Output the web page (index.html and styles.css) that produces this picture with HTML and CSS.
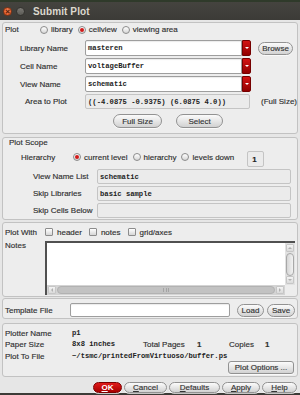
FILE: index.html
```html
<!DOCTYPE html>
<html lang="en">
<head>
    <meta charset="UTF-8">
    <title>Submit Plot</title>
    <link rel="stylesheet" href="styles.css">
</head>
<body>
    <!-- Title bar -->
    <div class="titlebar">
        <span class="wbtn close">×</span>
        <span class="wbtn min"></span>
        <span class="title">Submit Plot</span>
    </div>

    <div class="dialog">
        <!-- Plot -->
        <div class="frame f-plot">
            <div class="row r-plot">
                <span class="lbl w-plot">Plot</span>
                <span class="radio"><i></i>library</span>
                <span class="radio on"><i></i>cellview</span>
                <span class="radio"><i></i>viewing area</span>
            </div>
            <div class="row r-field first">
                <span class="lbl w-name">Library Name</span>
                <span class="input combo">masteren</span><span class="drop"></span>
                <span class="btn b-browse">Browse</span>
            </div>
            <div class="row r-field">
                <span class="lbl w-name">Cell Name</span>
                <span class="input combo">voltageBuffer</span><span class="drop"></span>
            </div>
            <div class="row r-field">
                <span class="lbl w-name">View Name</span>
                <span class="input combo">schematic</span><span class="drop"></span>
            </div>
            <div class="row r-area">
                <span class="lbl w-name w-area">Area to Plot</span>
                <span class="input ro area">((-4.0875 -0.9375) (6.0875 4.0))</span>
                <span class="lbl full">(Full Size)</span>
            </div>
            <div class="row r-btns">
                <span class="btn b-full">Full Size</span>
                <span class="btn b-select">Select</span>
            </div>
        </div>

        <!-- Plot Scope -->
        <div class="frame f-scope">
            <div class="row r-title">
                <span class="lbl">Plot Scope</span>
            </div>
            <div class="row r-hier">
                <span class="lbl w-hier up">Hierarchy</span>
                <span class="radio on up"><i></i>current level</span>
                <span class="radio up"><i></i>hierarchy</span>
                <span class="radio up"><i></i>levels down</span>
                <span class="spin">1</span>
            </div>
            <div class="row r-scope">
                <span class="lbl w-scope">View Name List</span>
                <span class="input ro scope">schematic</span>
            </div>
            <div class="row r-scope">
                <span class="lbl w-scope">Skip Libraries</span>
                <span class="input ro scope">basic sample</span>
            </div>
            <div class="row r-scope">
                <span class="lbl w-scope">Skip Cells Below</span>
                <span class="input ro scope"></span>
            </div>
        </div>

        <!-- Plot With / Notes -->
        <div class="frame f-with">
            <div class="row r-with">
                <span class="lbl w-with">Plot With</span>
                <span class="check"><i></i>header</span>
                <span class="check"><i></i>notes</span>
                <span class="check"><i></i>grid/axes</span>
            </div>
            <div class="row r-notes">
                <span class="lbl w-with notes-lbl">Notes</span>
                <div class="textarea">
                    <div class="text"></div>
                    <div class="vscroll">
                        <span class="arrow a-up"></span>
                        <span class="vthumb"></span>
                        <span class="arrow a-down"></span>
                    </div>
                    <div class="hscroll">
                        <span class="arrow a-left"></span>
                        <span class="hthumb"><b></b></span>
                        <span class="arrow a-right"></span>
                    </div>
                    <div class="corner"></div>
                </div>
            </div>
        </div>

        <!-- Template -->
        <div class="frame f-tmpl">
            <div class="row r-tmpl">
                <span class="lbl w-tmpl">Template File</span>
                <span class="input tmpl"></span>
                <span class="btn b-load">Load</span>
                <span class="btn b-save">Save</span>
            </div>
        </div>

        <!-- Plotter info -->
        <div class="frame f-info">
            <div class="row r-info first">
                <span class="lbl w-info">Plotter Name</span>
                <span class="val">p1</span>
            </div>
            <div class="row r-info">
                <span class="lbl w-info">Paper Size</span>
                <span class="val w-paper">8x8 inches</span>
                <span class="lbl w-total">Total Pages</span>
                <span class="lbl num w-one">1</span>
                <span class="lbl w-copies">Copies</span>
                <span class="lbl num">1</span>
            </div>
            <div class="row r-info third">
                <span class="lbl w-info">Plot To File</span>
                <span class="val">~/tsmc/printedFromVirtuoso/buffer.ps</span>
            </div>
            <div class="row r-opts">
                <span class="btn b-opts">Plot Options ...</span>
            </div>
        </div>

        <!-- Dialog buttons -->
        <div class="row r-actions">
            <span class="btn red b-ok"><u>O</u>K</span>
            <span class="btn b-cancel"><u>C</u>ancel</span>
            <span class="btn b-defaults"><u>D</u>efaults</span>
            <span class="btn b-apply"><u>A</u>pply</span>
            <span class="btn b-help"><u>H</u>elp</span>
        </div>
    </div>
    <div class="bottom-edge"></div>
</body>
</html>
```

FILE: styles.css
```css
/* base */
* {
    box-sizing: border-box;
}
body {
    margin: 0;
    width: 300px;
    height: 395px;
    overflow: hidden;
    font-family: "Liberation Sans", Arial, sans-serif;
    font-size: 8px;
    color: #303030;
    background: #e6e6e6;
    -webkit-text-stroke: 0.15px;
}

/* title bar */
.titlebar {
    height: 20px;
    background: linear-gradient(#45443f, #3c3b37);
    border-top: 2px solid #2f3a2a;
    display: flex;
    align-items: center;
    padding-left: 3px;
}
.wbtn {
    width: 9px;
    height: 9px;
    border-radius: 50%;
}
.close {
    background: radial-gradient(circle at 50% 40%, #f48a5e, #dc4b17);
    border: 1px solid #7d3416;
    color: #5a2008;
    font-size: 8px;
    line-height: 7px;
    text-align: center;
    font-weight: bold;
}
.min {
    margin-left: 4px;
    background: linear-gradient(#7b7974, #5b5a55);
    border: 1px solid #34332f;
}
.title {
    margin-left: 8px;
    color: #dcd8ce;
    font-weight: bold;
    font-size: 10px;
    letter-spacing: 0.1px;
    -webkit-text-stroke: 0;
}

/* frames */
.dialog {
    padding: 2px 2px 0;
}
.frame {
    border: 1px solid #c2c2c2;
    border-radius: 3px;
    background: #ededed;
    display: flex;
    flex-direction: column;
}
.f-plot { padding: 0 0 5px; }
.f-scope { margin-top: 3px; padding-bottom: 1px; }
.f-with { margin-top: 2px; padding-bottom: 1px; }
.f-tmpl { margin-top: 1px; padding-bottom: 1px; }
.f-info { margin-top: 4px; padding-bottom: 2px; }

.row {
    display: flex;
    align-items: center;
}
.lbl {
    white-space: nowrap;
}

/* radios and checkboxes */
.radio, .check {
    display: flex;
    align-items: center;
    margin-right: 5px;
}
.radio i, .check i {
    width: 8px;
    height: 8px;
    margin-right: 3px;
    border: 1px solid #8c8c8c;
    background: linear-gradient(#ffffff, #d6d6d6);
    display: flex;
    align-items: center;
    justify-content: center;
}
.radio i {
    border-radius: 50%;
}
.check i {
    border-radius: 1px;
    margin-right: 4px;
}
.check {
    margin-right: 7px;
}
.radio.on i::after {
    content: "";
    width: 4px;
    height: 4px;
    border-radius: 50%;
    background: #d21a1a;
}

/* inputs */
.input {
    height: 16px;
    border: 1px solid #9e9e9e;
    border-radius: 2px;
    background: #ffffff;
    box-shadow: inset 0 1px 1px rgba(0, 0, 0, 0.08);
    padding-left: 2px;
    font-family: "Liberation Mono", monospace;
    font-weight: bold;
    font-size: 7.2px;
    color: #222;
    -webkit-text-stroke: 0;
    display: flex;
    align-items: center;
    white-space: nowrap;
    overflow: hidden;
}
.input.ro {
    background: #ebebeb;
    border-color: #c4c4c4;
    box-shadow: none;
}
.combo {
    width: 157px;
    border-radius: 2px 0 0 2px;
}
.drop {
    width: 9px;
    height: 16px;
    background: linear-gradient(#d41414, #920000);
    border: 1px solid #760000;
    border-radius: 0 2px 2px 0;
    display: flex;
    align-items: center;
    justify-content: center;
}
.drop::after {
    content: "";
    border-left: 2px solid transparent;
    border-right: 2px solid transparent;
    border-top: 2px solid #ffffff;
}

/* buttons */
.btn {
    height: 14px;
    border: 1px solid #929292;
    border-radius: 7px;
    background: linear-gradient(#fbfbfb, #d2d2d2);
    box-shadow: 0 1px 0 rgba(255, 255, 255, 0.7);
    color: #333;
    display: flex;
    align-items: center;
    justify-content: center;
    white-space: nowrap;
}
.btn.red {
    background: linear-gradient(#e01a1a, #a80000);
    border-color: #7a0000;
    color: #ffffff;
    font-weight: bold;
    -webkit-text-stroke: 0;
}

/* Plot frame */
.r-plot {
    height: 13px;
    padding-left: 2px;
}
.w-plot { width: 35px; }
.r-field {
    height: 16px;
    margin-top: 2px;
}
.r-field.first { margin-top: 4px; }
.w-name {
    width: 82px;
    padding-left: 17px;
}
.w-area { padding-left: 22px; }
.b-browse {
    margin-left: 7px;
    width: 35px;
    height: 13px;
}
.r-area {
    height: 15px;
    margin-top: 2px;
}
.area {
    width: 165px;
    height: 15px;
}
.full { margin-left: 11px; }
.r-btns {
    height: 14px;
    margin-top: 5px;
    padding-left: 110px;
}
.b-full { width: 49px; }
.b-select {
    width: 47px;
    margin-left: 14px;
}

/* Plot Scope frame */
.r-title {
    height: 9px;
    padding-left: 6px;
}
.r-hier {
    height: 16px;
    margin-top: 4px;
}
.up { margin-bottom: 4px; }
.w-hier {
    width: 70px;
    padding-left: 18px;
}
.spin {
    width: 17px;
    height: 16px;
    margin-left: 8px;
    border: 1px solid #c4c4c4;
    border-radius: 2px;
    background: #ebebeb;
    padding-left: 4px;
    display: flex;
    align-items: center;
    font-weight: bold;
    color: #222;
}
.r-scope {
    height: 15px;
    margin-top: 2px;
}
.w-scope {
    width: 94px;
    padding-left: 30px;
}
.scope {
    width: 194px;
    height: 15px;
}

/* Plot With frame */
.r-with {
    height: 12px;
    margin-top: 3px;
    padding-left: 2px;
}
.w-with { width: 40px; }
.r-notes {
    margin-top: 3px;
    padding-left: 2px;
    align-items: flex-start;
}
.notes-lbl { line-height: 10px; }
.textarea {
    width: 250px;
    height: 54px;
    border-top: 2px solid #505050;
    border-left: 2px solid #505050;
    background: #ffffff;
    display: grid;
    grid-template-columns: 1fr 10px;
    grid-template-rows: 1fr 10px;
}
.vscroll {
    background: #e2e2e2;
    display: flex;
    flex-direction: column;
    align-items: center;
    padding: 1px 0;
}
.hscroll {
    background: #d4d4d4;
    display: flex;
    align-items: center;
    padding: 0 1px;
}
.corner {
    background: #ededed;
}
.arrow {
    width: 8px;
    height: 8px;
    background: linear-gradient(#f4f4f4, #dadada);
    border: 1px solid #c6c6c6;
    border-radius: 1px;
    display: flex;
    align-items: center;
    justify-content: center;
}
.arrow::after {
    content: "";
    border: 2px solid transparent;
}
.a-up::after { border-bottom-color: #b0b0b0; margin-top: -2px; }
.a-down::after { border-top-color: #b0b0b0; margin-bottom: -2px; }
.a-left::after { border-right-color: #b0b0b0; margin-left: -2px; }
.a-right::after { border-left-color: #b0b0b0; margin-right: -2px; }
.vthumb {
    width: 8px;
    height: 23px;
    margin-top: 1px;
    border: 1px solid #a8a8a8;
    border-radius: 4px;
    background: linear-gradient(90deg, #d6d6d6, #f2f2f2);
}
.a-down { margin-top: auto; }
.hthumb {
    flex: 1;
    height: 8px;
    margin: 0 1px;
    border-radius: 4px;
    background: #c2c2c2;
    border: 1px solid #b2b2b2;
    display: flex;
    align-items: center;
    justify-content: center;
}
.hthumb b {
    width: 6px;
    height: 4px;
    border-left: 1px solid #a4a4a4;
    border-right: 1px solid #a4a4a4;
    background: linear-gradient(90deg, transparent 2px, #a4a4a4 2px, #a4a4a4 3px, transparent 3px);
}

/* Template frame */
.r-tmpl {
    height: 14px;
    margin-top: 4px;
    padding-left: 2px;
}
.w-tmpl { width: 65px; }
.tmpl {
    width: 160px;
    height: 14px;
}
.b-load {
    width: 27px;
    height: 13px;
    margin-left: 7px;
}
.b-save {
    width: 28px;
    height: 13px;
    margin-left: 3px;
}

/* Plotter info frame */
.r-info {
    height: 10px;
    margin-top: 1px;
    padding-left: 2px;
}
.r-info.first { margin-top: 4px; }
.r-info.third { margin-top: 2px; }
.w-info { width: 67px; }
.val {
    font-family: "Liberation Mono", monospace;
    font-weight: bold;
    font-size: 7.2px;
    color: #222;
    -webkit-text-stroke: 0;
    white-space: nowrap;
}
.w-paper { width: 71px; }
.w-total { width: 54px; }
.w-one { width: 32px; }
.w-copies { width: 36px; }
.num { font-weight: bold; }
.r-opts {
    justify-content: flex-end;
    padding-right: 3px;
}
.b-opts {
    width: 66px;
    height: 13px;
    border-radius: 3px;
}

/* dialog buttons */
.r-actions {
    margin-top: 5px;
    justify-content: flex-end;
    padding-right: 1px;
}
.r-actions .btn {
    height: 11px;
    margin-left: 2px;
}
.b-ok { width: 29px; }
.b-cancel { width: 43px; }
.b-defaults { width: 51px; }
.b-apply { width: 38px; }
.b-help { width: 35px; }
.bottom-edge {
    height: 3px;
    background: #3c3b37;
}
```
